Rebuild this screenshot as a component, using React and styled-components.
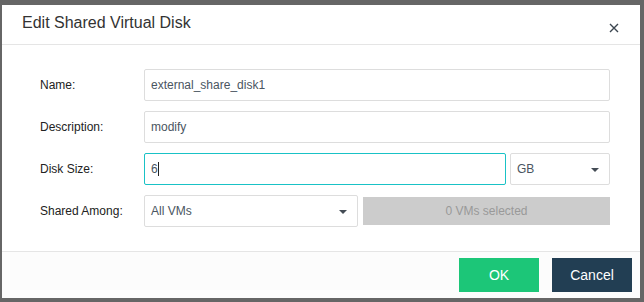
import React from "react";
import styled, { createGlobalStyle } from "styled-components";

const GlobalStyle = createGlobalStyle`
  html, body {
    margin: 0;
    padding: 0;
    background: #666666;
  }
  body {
    font-family: "Liberation Sans", Arial, sans-serif;
  }
`;

const Backdrop = styled.div`
  width: 644px;
  height: 302px;
  box-sizing: border-box;
  padding: 5px 4px 4px 2px;
  background: #666666;
`;

const Dialog = styled.div`
  height: 100%;
  background: #ffffff;
  display: flex;
  flex-direction: column;
`;

const Header = styled.div`
  height: 39px;
  flex-shrink: 0;
  border-bottom: 1px solid #e5e5e5;
  display: flex;
  align-items: center;
  justify-content: space-between;
  padding: 0 21px 0 20px;
`;

const Title = styled.h4`
  margin: 0;
  margin-top: -3px;
  font-size: 16px;
  font-weight: normal;
  color: #333333;
`;

const Close = styled.button`
  border: none;
  background: none;
  padding: 0;
  margin-top: 7px;
  width: 10px;
  height: 10px;
  display: flex;
  cursor: pointer;
`;

const Body = styled.div`
  flex: 1;
  padding: 24px 30px 24px 38px;
  display: flex;
  flex-direction: column;
  gap: 10px;
  border-bottom: 1px solid #e5e5e5;
`;

const Row = styled.div`
  display: flex;
  align-items: center;
  height: 32px;
  flex-shrink: 0;
`;

const Label = styled.label`
  width: 104px;
  flex-shrink: 0;
  font-size: 12px;
  color: #222222;
`;

const Controls = styled.div`
  flex: 1;
  display: flex;
  align-items: center;
  gap: ${(p) => p.gap || 0}px;
`;

const Input = styled.input`
  box-sizing: border-box;
  height: 32px;
  width: 100%;
  border: 1px solid #dddddd;
  border-radius: 2px;
  padding: 0 6px;
  font-family: inherit;
  font-size: 12px;
  color: #4a5561;
  outline: none;
  background: #fff;
`;

const FocusField = styled.div`
  box-sizing: border-box;
  height: 32px;
  flex: 1;
  border: 1px solid #19c2c6;
  border-radius: 2px;
  padding: 0 6px;
  font-size: 12px;
  color: #4a5561;
  display: flex;
  align-items: center;
`;

const Caret = styled.span`
  display: inline-block;
  width: 1px;
  height: 14px;
  background: #222;
`;

const Select = styled.div`
  box-sizing: border-box;
  height: 32px;
  width: ${(p) => p.w}px;
  flex-shrink: 0;
  border: 1px solid #dddddd;
  border-radius: 2px;
  padding: 0 10px 0 6px;
  font-size: 12px;
  color: #4a5561;
  display: flex;
  align-items: center;
  justify-content: space-between;
`;

const Arrow = styled.span`
  width: 0;
  height: 0;
  border-left: 4px solid transparent;
  border-right: 4px solid transparent;
  border-top: 4px solid #444c55;
  margin-top: 1px;
`;

const Picker = styled.div`
  flex: 1;
  height: 28px;
  background: #cccccc;
  color: #999999;
  font-size: 12px;
  display: flex;
  align-items: center;
  justify-content: center;
`;

const Footer = styled.div`
  height: 46px;
  flex-shrink: 0;
  background: #fcfcfc;
  display: flex;
  align-items: center;
  justify-content: flex-end;
  gap: 13px;
  padding: 0 8px;
`;

const Button = styled.button`
  width: 80px;
  height: 34px;
  border: none;
  border-radius: 0;
  font-family: inherit;
  font-size: 14px;
  color: #ffffff;
  background: ${(p) => (p.primary ? "#1cc678" : "#223e53")};
  cursor: pointer;
`;

export default function App() {
  return (
    <>
      <GlobalStyle />
      <Backdrop>
        <Dialog>
          <Header>
            <Title>Edit Shared Virtual Disk</Title>
            <Close aria-label="close">
              <svg width="10" height="10" viewBox="0 0 10 10">
                <path d="M1 1 L9 9 M9 1 L1 9" stroke="#3c4650" strokeWidth="1.4" />
              </svg>
            </Close>
          </Header>
          <Body>
            <Row>
              <Label>Name:</Label>
              <Controls>
                <Input defaultValue="external_share_disk1" />
              </Controls>
            </Row>
            <Row>
              <Label>Description:</Label>
              <Controls>
                <Input defaultValue="modify" />
              </Controls>
            </Row>
            <Row>
              <Label>Disk Size:</Label>
              <Controls gap={4}>
                <FocusField>
                  6<Caret />
                </FocusField>
                <Select w={100}>
                  GB
                  <Arrow />
                </Select>
              </Controls>
            </Row>
            <Row>
              <Label>Shared Among:</Label>
              <Controls gap={5}>
                <Select w={214}>
                  All VMs
                  <Arrow />
                </Select>
                <Picker>0 VMs selected</Picker>
              </Controls>
            </Row>
          </Body>
          <Footer>
            <Button primary>OK</Button>
            <Button>Cancel</Button>
          </Footer>
        </Dialog>
      </Backdrop>
    </>
  );
}
